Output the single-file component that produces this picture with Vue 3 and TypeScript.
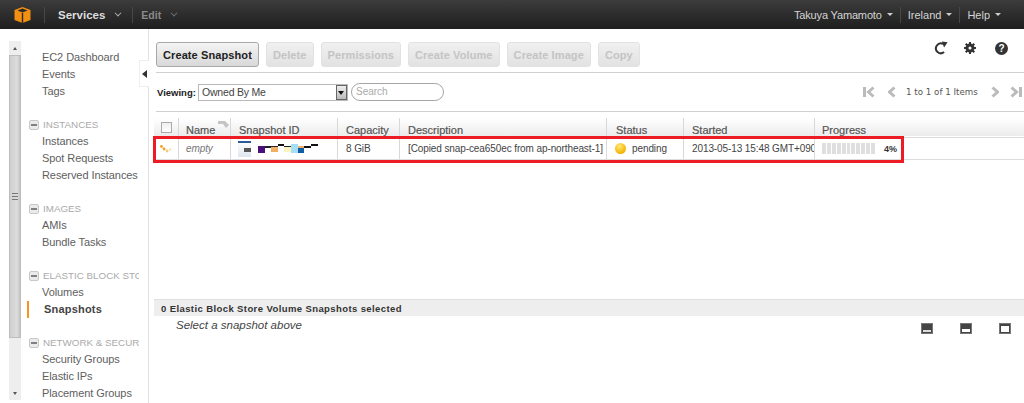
<script setup lang="ts">
interface NavGroup {
  title?: string;
  items: string[];
}

const navGroups: NavGroup[] = [
  { items: ['EC2 Dashboard', 'Events', 'Tags'] },
  { title: 'INSTANCES', items: ['Instances', 'Spot Requests', 'Reserved Instances'] },
  { title: 'IMAGES', items: ['AMIs', 'Bundle Tasks'] },
  { title: 'ELASTIC BLOCK STORE', items: ['Volumes', 'Snapshots'] },
  { title: 'NETWORK & SECURITY', items: ['Security Groups', 'Elastic IPs', 'Placement Groups'] },
];

const actions = ['Delete', 'Permissions', 'Create Volume', 'Create Image', 'Copy'];

// censored id in the screenshot, a strip of coloured blocks
const idBlocks = [
  { w: 7, h: 7, c: '#4b0f7c', t: 2 },
  { w: 6, h: 2, c: '#222', t: 2 },
  { w: 7, h: 6, c: 'linear-gradient(#222 1px, #f2ae63 1px)', t: 2 },
  { w: 6, h: 2, c: '#111', t: 0 },
  { w: 7, h: 6, c: 'linear-gradient(#222 1px, #fbf4c0 1px)', t: 2 },
  { w: 7, h: 9, c: '#a5def5', t: 0 },
  { w: 6, h: 7, c: 'linear-gradient(#f2ae63 2px, #0d5fa8 2px)', t: 2 },
  { w: 7, h: 2, c: '#111', t: 2 },
  { w: 7, h: 2, c: '#111', t: 0 },
];

const progressSegments = Array.from({ length: 11 });
</script>

<template>
  <div class="page">
    <header class="topbar">
      <svg class="logo" width="17" height="16" viewBox="0 0 17 16">
        <path d="M8.500 0 L16.500 3 V13 L8.500 16 L0.500 13 V3 Z" fill="#f29111" />
        <path d="M8.500 5.500 L3.500 3.500 L8.500 1.600 L13.500 3.500 Z" fill="#2b2b2b" />
        <path d="M8.500 6 V16" stroke="#2b2b2b" stroke-width="1.400" />
      </svg>
      <span class="bar-sep first"></span>
      <span class="services">Services</span>
      <span class="chev"></span>
      <span class="bar-sep second"></span>
      <span class="edit">Edit</span>
      <span class="chev dim"></span>
      <span class="bar-right">
        <span class="user-menu user-name">Takuya Yamamoto <i class="caret"></i></span>
        <span class="bar-sep"></span>
        <span class="user-menu">Ireland <i class="caret"></i></span>
        <span class="bar-sep"></span>
        <span class="user-menu">Help <i class="caret"></i></span>
      </span>
    </header>

    <div class="body">
      <aside class="sidebar">
        <div class="scrollbar">
          <span class="scroll-arrow up"></span>
          <div class="thumb"><span class="grip"></span></div>
          <span class="scroll-arrow down"></span>
        </div>
        <nav class="nav">
          <div v-for="(group, i) in navGroups" :key="i" class="nav-group">
            <div v-if="group.title" class="nav-title">
              <span class="collapse"></span>
              <span class="nav-title-text">{{ group.title }}</span>
            </div>
            <div
              v-for="item in group.items"
              :key="item"
              class="nav-item"
              :class="{ active: item === 'Snapshots' }"
            >
              {{ item }}
            </div>
          </div>
        </nav>
        <div class="collapse-tab"><span></span></div>
      </aside>

      <main class="main">
        <div class="toolbar">
          <button class="btn primary">Create Snapshot</button>
          <button v-for="a in actions" :key="a" class="btn" disabled>{{ a }}</button>
          <span class="tools">
            <svg width="14" height="14" viewBox="0 0 16 16">
              <path d="M11.500 12.600 A5.600 5.600 0 1 1 10.500 3.400" fill="none" stroke="#333" stroke-width="2.300" />
              <path d="M9 0.500 L15.500 1.500 L11.500 7.500 Z" fill="#333" />
            </svg>
            <svg class="gear" width="12" height="12" viewBox="0 0 14 14">
              <circle cx="7" cy="7" r="3.700" fill="none" stroke="#333" stroke-width="3" />
              <path d="M7 0 V14 M0 7 H14 M2 2 L12 12 M12 2 L2 12" stroke="#333" stroke-width="2.400" />
              <circle cx="7" cy="7" r="1.800" fill="#fff" />
            </svg>
            <span class="help">?</span>
          </span>
        </div>

        <div class="filters">
          <label class="viewing">Viewing:</label>
          <div class="select">
            <span>Owned By Me</span>
            <i class="select-arrow"></i>
          </div>
          <div class="search">Search</div>
          <div class="pager">
            <svg width="12" height="12" viewBox="0 0 12 12">
              <path d="M0 1H3V11H0Z" fill="#bbb" />
              <path d="M10.500 1.500 L5.500 6 L10.500 10.500" fill="none" stroke="#bbb" stroke-width="3" />
            </svg>
            <svg class="to-prev" width="8" height="12" viewBox="0 0 8 12">
              <path d="M6.500 1.500 L1.500 6 L6.500 10.500" fill="none" stroke="#bbb" stroke-width="3" />
            </svg>
            <span class="pager-text">1 to 1 of 1 Items</span>
            <svg width="8" height="12" viewBox="0 0 8 12">
              <path d="M1.500 1.500 L6.500 6 L1.500 10.500" fill="none" stroke="#bbb" stroke-width="3" />
            </svg>
            <svg class="to-last" width="12" height="12" viewBox="0 0 12 12">
              <path d="M1.500 1.500 L6.500 6 L1.500 10.500" fill="none" stroke="#bbb" stroke-width="3" />
              <path d="M9 1H12V11H9Z" fill="#bbb" />
            </svg>
          </div>
        </div>

        <div class="table">
          <div class="row head">
            <div class="cell check"><span class="checkbox"></span></div>
            <div class="cell name-col">Name
              <svg class="tag" width="12" height="9" viewBox="0 0 12 9"><path d="M0 1H7L11 5L8 8L5 4H0Z" fill="#c4c4c4" /></svg>
            </div>
            <div class="cell">Snapshot ID</div>
            <div class="cell">Capacity</div>
            <div class="cell">Description</div>
            <div class="cell status-head">Status</div>
            <div class="cell">Started</div>
            <div class="cell progress-head">Progress</div>
          </div>
          <div class="row data">
            <div class="cell check">
              <svg width="12" height="8" viewBox="0 0 12 8">
                <circle cx="1.500" cy="1.500" r="1.400" fill="#f0a020" />
                <circle cx="4" cy="4" r="1.400" fill="#f0a020" />
                <circle cx="7" cy="6" r="1.400" fill="#f6c878" />
                <circle cx="10" cy="4.500" r="1.200" fill="#fadfb0" />
              </svg>
            </div>
            <div class="cell empty">empty</div>
            <div class="cell id-cell">
              <span class="id-icon"><i class="blue"></i><i class="dark"></i></span>
              <span class="id-strip">
                <i
                  v-for="(b, i) in idBlocks"
                  :key="i"
                  :style="{ width: b.w + 'px', height: b.h + 'px', background: b.c, marginTop: b.t + 'px' }"
                ></i>
              </span>
            </div>
            <div class="cell">8 GiB</div>
            <div class="cell">[Copied snap-cea650ec from ap-northeast-1]</div>
            <div class="cell status"><span class="dot"></span>pending</div>
            <div class="cell">2013-05-13 15:48 GMT+0900</div>
            <div class="cell progress">
              <span class="bar"><i v-for="(_, i) in progressSegments" :key="i"></i></span>
              <b>4%</b>
            </div>
          </div>
          <div class="red-box"></div>
        </div>

        <div class="spacer"></div>

        <div class="details">
          <div class="details-head">0 Elastic Block Store Volume Snapshots selected</div>
          <div class="details-body">
            <em>Select a snapshot above</em>
            <span class="panes">
              <span class="pane"><i class="low"></i></span>
              <span class="pane"><i class="mid"></i></span>
              <span class="pane"><i class="tall"></i></span>
            </span>
          </div>
        </div>
      </main>
    </div>
  </div>
</template>

<style>
html,
body {
  margin: 0;
  background: #fff;
  overflow: hidden;
}
</style>

<style scoped>
.page {
  width: 1024px;
  height: 403px;
  display: flex;
  flex-direction: column;
  overflow: hidden;
  font-family: "Liberation Sans", Arial, sans-serif;
  font-size: 11px;
  color: #444;
}

.topbar {
  height: 29px;
  flex-shrink: 0;
  display: flex;
  align-items: center;
  background: linear-gradient(#3c3c3c, #1e1e1e);
  color: #ddd;
  padding-left: 14px;
  box-sizing: border-box;
}

.logo {
  margin-right: 13px;
}

.bar-sep {
  width: 1px;
  height: 16px;
  background: #474747;
}

.bar-sep.first {
  margin-right: 13px;
}

.bar-sep.second {
  margin: 0 8px 0 11px;
}

.services {
  font-weight: bold;
  font-size: 11.500px;
  color: #ddd;
}

.edit {
  color: #8a8a8a;
  font-size: 10.500px;
  font-weight: bold;
}

.chev {
  width: 5px;
  height: 5px;
  margin: -3px 0 0 10px;
  border-right: 1.500px solid #bbb;
  border-bottom: 1.500px solid #bbb;
  transform: rotate(45deg) scale(0.8);
}

.chev.dim {
  border-color: #777;
}

.bar-right {
  margin-left: auto;
  display: flex;
  align-items: center;
  gap: 7px;
  margin-right: 23px;
  font-size: 11px;
}

.user-menu {
  display: flex;
  align-items: center;
  gap: 5px;
  color: #d4d4d4;
}

.user-name {
  letter-spacing: -0.15px;
}

.caret {
  border: 3px solid transparent;
  border-top: 3px solid #ccc;
  border-bottom: 0;
}

.body {
  flex: 1;
  display: flex;
  min-height: 0;
}

.sidebar {
  position: relative;
  width: 149px;
  flex-shrink: 0;
  box-sizing: border-box;
  border-right: 1px solid #e2e2e2;
  display: flex;
  padding-left: 9px;
}

.scrollbar {
  width: 12px;
  margin-top: 12px;
  height: 359px;
  background: #eeeeee;
  display: flex;
  flex-direction: column;
  align-items: center;
  flex-shrink: 0;
}

.scroll-arrow {
  width: 12px;
  height: 14px;
  flex-shrink: 0;
  display: flex;
  justify-content: center;
  align-items: center;
}

.scroll-arrow::before {
  content: "";
  border: 2.500px solid transparent;
}

.scroll-arrow.up::before {
  border-bottom: 3px solid #555;
  border-top: 0;
}

.scroll-arrow.down {
  margin-top: auto;
}

.scroll-arrow.down::before {
  border-top: 3px solid #555;
  border-bottom: 0;
}

.thumb {
  width: 12px;
  height: 283px;
  box-sizing: border-box;
  background: linear-gradient(90deg, #cfcfcf, #dcdcdc 70%, #c4c4c4);
  border: 1px solid #bdbdbd;
  display: flex;
  align-items: center;
  justify-content: center;
}

.grip {
  width: 6px;
  height: 5px;
  border-top: 1px solid #777;
  border-bottom: 1px solid #777;
  background: linear-gradient(#777, #777) center / 100% 1px no-repeat;
}

.nav {
  margin-left: 8px;
  padding-top: 20px;
  width: 110px;
  display: flex;
  flex-direction: column;
  gap: 16px;
  white-space: nowrap;
}

.nav-title {
  height: 17px;
  display: flex;
  align-items: center;
  color: #aaa;
  font-size: 9.800px;
}

.nav-title-text {
  width: 98px;
  overflow: hidden;
}

.collapse {
  position: relative;
  width: 8px;
  height: 8px;
  margin: 0 4px 0 0;
  flex-shrink: 0;
  background: #eaeaea;
  border: 1px solid #c8c8c8;
  border-radius: 2px;
}

.collapse::after {
  content: "";
  position: absolute;
  left: 1px;
  right: 1px;
  top: 3px;
  height: 2px;
  background: #808080;
}

.nav-item {
  height: 17px;
  line-height: 17px;
  padding-left: 13px;
  color: #606060;
  letter-spacing: -0.08px;
}

.nav-item.active {
  position: relative;
  font-weight: bold;
  color: #444;
  padding-left: 15px;
  letter-spacing: 0.2px;
}

.nav-item.active::before {
  content: "";
  position: absolute;
  left: -2px;
  top: 0;
  width: 2px;
  height: 17px;
  background: #f7941e;
}

.collapse-tab {
  position: absolute;
  right: -1px;
  top: 31px;
  width: 9px;
  height: 25px;
  background: #fff;
  border: 1px solid #eee;
  border-right: 0;
  display: flex;
  align-items: center;
  justify-content: center;
}

.collapse-tab span {
  border: 4px solid transparent;
  border-right: 5px solid #333;
  border-left: 0;
}

.main {
  flex: 1;
  min-width: 0;
  display: flex;
  flex-direction: column;
  padding-left: 5px;
}

.toolbar {
  height: 44px;
  flex-shrink: 0;
  box-sizing: border-box;
  margin-left: 2px;
  padding-top: 13px;
  display: flex;
  align-items: flex-start;
  gap: 7px;
  border-bottom: 1px solid #d0d0d0;
}

.btn {
  height: 25px;
  padding: 0 6px;
  font-family: "Liberation Sans", Arial, sans-serif;
  font-size: 11px;
  font-weight: bold;
  letter-spacing: 0.1px;
  border: 1px solid #e2e2e2;
  border-radius: 3px;
  background: linear-gradient(#f0f0f0, #e2e2e2);
  color: #c4c4c4;
}

.btn.primary {
  color: #222;
  border-color: #a8a8a8;
  background: linear-gradient(#f4f4f4, #d8d8d8);
}

.tools {
  margin-left: auto;
  margin-right: 16px;
  margin-top: -1px;
  display: flex;
  align-items: center;
  gap: 16px;
}

.help {
  width: 13px;
  height: 13px;
  margin-left: 3px;
  border-radius: 50%;
  background: #333;
  color: #fff;
  font-size: 10px;
  font-weight: bold;
  line-height: 13px;
  text-align: center;
}

.filters {
  height: 39px;
  flex-shrink: 0;
  box-sizing: border-box;
  margin-left: 2px;
  display: flex;
  align-items: center;
  border-bottom: 1px solid #d0d0d0;
}

.viewing {
  font-size: 9.500px;
  font-weight: bold;
  color: #222;
  margin-left: 1px;
  width: 41px;
}

.select {
  width: 145px;
  height: 15px;
  border: 1px solid #b8b8b8;
  display: flex;
  align-items: center;
  justify-content: space-between;
  padding-left: 3px;
  font-size: 10.500px;
  letter-spacing: -0.2px;
  color: #444;
}

.select-arrow {
  width: 9px;
  height: 13px;
  border: 1px solid #666;
  background: linear-gradient(#eee, #bbb);
  position: relative;
}

.select-arrow::after {
  content: "";
  position: absolute;
  left: 1px;
  top: 5px;
  border: 3.500px solid transparent;
  border-top: 4px solid #111;
  border-bottom: 0;
}

.search {
  width: 87px;
  height: 16px;
  line-height: 16px;
  margin-left: 3px;
  border: 1px solid #a6a6a6;
  border-radius: 9px;
  padding-left: 4px;
  font-size: 10px;
  color: #aaa;
}

.pager {
  margin-left: auto;
  display: flex;
  align-items: center;
  margin-right: 2px;
}

.to-prev {
  margin-left: 13px;
}

.to-last {
  margin-left: 11px;
}

.pager-text {
  font-family: "DejaVu Sans", sans-serif;
  font-size: 8.700px;
  color: #555;
  margin: 0 12px 0 10px;
  width: 73px;
  white-space: nowrap;
}

.table {
  position: relative;
  margin-top: 6px;
  flex-shrink: 0;
  white-space: nowrap;
}

.row {
  display: grid;
  grid-template-columns: 25px 52px 107px 62px 207px 77px 131px 1fr;
}

.row.head {
  height: 18px;
  background: linear-gradient(#fff, #ececec);
  color: #555;
  -webkit-text-stroke: 0.2px #555;
}

.row.head .cell {
  align-items: flex-end;
}

.row.data {
  height: 23px;
  font-size: 10px;
  letter-spacing: -0.1px;
  border-top: 1px solid #dcdcdc;
  border-bottom: 1px solid #dcdcdc;
  margin-top: 1px;
  box-sizing: border-box;
}

.cell {
  display: flex;
  align-items: center;
  padding-left: 8px;
  box-sizing: border-box;
  border-right: 1px solid #d8d8d8;
  overflow: hidden;
  min-width: 0;
}

.cell:last-child {
  border-right: 0;
}

.row .check {
  padding-left: 6px;
}

.row.head .check {
  padding-left: 7px;
  align-items: center;
}

.checkbox {
  width: 9px;
  height: 9px;
  border: 1px solid #aaa;
  background: linear-gradient(#eee, #fff);
}

.name-col {
  position: relative;
  padding-left: 7px;
}

.tag {
  position: absolute;
  left: 39px;
  top: 2px;
}

.empty {
  padding-left: 7px;
  color: #777;
  font-style: italic;
}

.id-cell {
  padding-left: 7px;
  gap: 7px;
}

.id-icon {
  width: 13px;
  height: 16px;
  background: linear-gradient(#fff, #dde6ee);
  position: relative;
  flex-shrink: 0;
}

.id-icon .blue {
  position: absolute;
  left: 0;
  top: 0;
  width: 13px;
  height: 2px;
  background: #2a5a9e;
}

.id-icon .dark {
  position: absolute;
  right: 0;
  top: 7px;
  width: 7px;
  height: 4px;
  background: #555;
}

.id-strip {
  display: flex;
  height: 9px;
  align-items: flex-start;
}

.id-strip i {
  display: block;
}

.status-head {
  padding-left: 9px;
}

.progress-head,
.progress {
  padding-left: 7px;
}

.status {
  gap: 6px;
}

.dot {
  width: 11px;
  height: 11px;
  border-radius: 50%;
  background: radial-gradient(circle at 40% 30%, #ffe77a, #f4b400 70%, #d59a00);
}

.bar {
  display: flex;
  gap: 1px;
  width: 53px;
}

.bar i {
  width: 4px;
  height: 11px;
  background: #dfdfdf;
}

.progress b {
  margin-left: 9px;
  font-size: 9px;
  color: #333;
}

.red-box {
  position: absolute;
  left: -1px;
  top: 18px;
  width: 751px;
  height: 27px;
  box-sizing: border-box;
  border: 3px solid #ed1c24;
  pointer-events: none;
}

.spacer {
  flex: 1;
}

.details {
  height: 104px;
  flex-shrink: 0;
}

.details-head {
  height: 17px;
  line-height: 17px;
  box-sizing: border-box;
  background: #eeeeee;
  border-top: 1px solid #e0e0e0;
  font-size: 9.500px;
  font-weight: bold;
  color: #333;
  padding-left: 7px;
  letter-spacing: 0.4px;
}

.details-body {
  display: flex;
  justify-content: space-between;
  padding: 3px 13px 0 22px;
}

.details-body em {
  font-size: 11.500px;
  color: #444;
}

.panes {
  display: flex;
  gap: 27px;
  padding-top: 4px;
}

.pane {
  position: relative;
  width: 12px;
  height: 11px;
  box-sizing: border-box;
  background: #444;
  display: block;
  border: 1px solid #777;
}

.pane i {
  position: absolute;
  left: 1px;
  right: 1px;
  bottom: 1px;
  background: #ddd;
}

.pane .low {
  height: 2px;
}

.pane .mid {
  height: 3px;
  background: #fff;
}

.pane .tall {
  height: 6px;
  background: #fff;
}
</style>
